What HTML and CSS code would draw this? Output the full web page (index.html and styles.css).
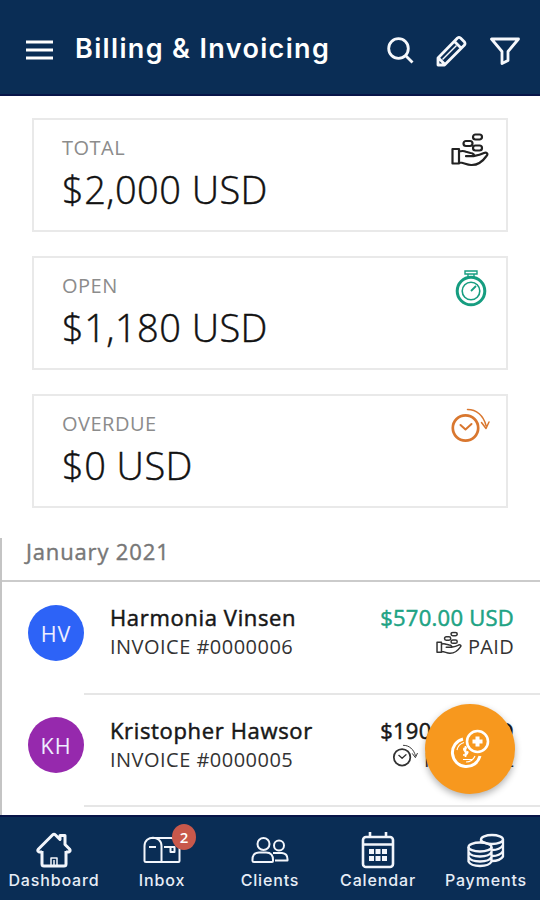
FILE: index.html
```html
<!DOCTYPE html>
<html lang="en">
<head>
<meta charset="utf-8">
<title>Billing &amp; Invoicing</title>
<link rel="stylesheet" href="styles.css">
</head>
<body>
<svg class="defs" width="0" height="0" aria-hidden="true">
  <symbol id="hand" viewBox="0 0 38 34">
    <g fill="none" stroke="currentColor" stroke-width="2.200" stroke-linejoin="round" stroke-linecap="round">
      <path d="M1.500 16h6.500v14.500H1.500zM8 18.500c3-.8 5-.8 7 .3l4.500 1.200c3 .2 4 2 3 3.200h-7.500M22.500 23.200c4-.8 7-1.500 10.500-3.200 2.500-1 4.500.8 2.500 3-3.500 5-9.500 9.300-15.500 9-5-.3-7-2.500-12-2.500"/>
      <rect x="22" y="1.500" width="9" height="5" rx="2.500"/><rect x="12.500" y="8" width="9" height="5" rx="2.500"/><rect x="22" y="12.500" width="9" height="5" rx="2.500"/>
    </g>
  </symbol>
  <symbol id="late" viewBox="0 0 40 36">
    <g fill="none" stroke="currentColor" stroke-linecap="round" stroke-linejoin="round">
      <circle cx="15.500" cy="20" r="12.700" stroke-width="2.700"/>
      <path stroke-width="2" d="M10.500 17l5 4.500 6-5.500"/>
      <path stroke-width="1.500" d="M17.500 1.500c9 0 16 6 18.500 16M31.500 14.500l4.500 6 3-6.500"/>
    </g>
  </symbol>
</svg>
<div class="app">
  <header class="top">
    <svg class="menu" viewBox="0 0 27 20"><path d="M0 2h27M0 10h27M0 18h27" stroke="#fff" stroke-width="3"/></svg>
    <h1>Billing &amp; Invoicing</h1>
    <div class="tools">
      <svg width="28" height="28" viewBox="0 0 28 28"><circle cx="12.500" cy="11.500" r="9.800"/><path d="M19.500 18.500l7 7"/></svg>
      <svg width="32" height="32" viewBox="0 0 32 32"><path d="M3 30V23L22.500 3Q24 1.800 25.500 3L29.500 7Q30.500 8.500 29.500 10L9.500 30ZM19.500 6.500l6.500 6.500M3.500 23l6.500 6.500"/><path stroke-width="1.500" d="M7.500 24.500l14-14"/></svg>
      <svg width="32" height="28" viewBox="0 0 32 28"><path d="M3.500 2H30.500L20 14.500V23.500L14 26.500V14.500Z"/></svg>
    </div>
  </header>
  <main>
    <section class="cards">
      <article class="card"><div><p class="label">TOTAL</p><p class="sum">$2,000 USD</p></div><svg class="i-hand" viewBox="0 0 38 34"><use href="#hand"/></svg></article>
      <article class="card"><div><p class="label">OPEN</p><p class="sum">$1,180 USD</p></div>
        <svg class="i-watch" viewBox="0 0 32 38" fill="none" stroke="#169d80"><circle cx="16" cy="22" r="13.800" stroke-width="3"/><circle cx="16" cy="22" r="8.800" stroke-width="1.600"/><path stroke-width="1.800" d="M16 22l5-5"/><path stroke-width="1.400" d="M10 2h12v3H10zM13 5v4M19 5v4"/></svg></article>
      <article class="card"><div><p class="label">OVERDUE</p><p class="sum">$0 USD</p></div><svg class="i-late" viewBox="0 0 40 36"><use href="#late"/></svg></article>
    </section>
    <section class="list">
      <h2>January 2021</h2>
      <article class="row">
        <span class="avatar blue">HV</span>
        <div class="body">
          <div><p class="name">Harmonia Vinsen</p><p class="inv">INVOICE #0000006</p></div>
          <div class="amt"><p class="money paid">$570.00 USD</p><p class="state"><svg class="s-hand" viewBox="0 0 38 34"><use href="#hand"/></svg><span>PAID</span></p></div>
        </div>
      </article>
      <article class="row">
        <span class="avatar purple">KH</span>
        <div class="body">
          <div><p class="name">Kristopher Hawsor</p><p class="inv">INVOICE #0000005</p></div>
          <div class="amt"><p class="money">$190.00 USD</p><p class="state"><svg class="s-late" viewBox="0 0 40 36"><use href="#late"/></svg><span class="partial">PARTIAL</span></p></div>
        </div>
      </article>
    </section>
  </main>
  <button class="fab" aria-label="Add invoice">
    <svg width="40" height="40" viewBox="0 0 40 40" fill="none" stroke="#fff"><path stroke-width="3" d="M13 10A14 14 0 1 0 30 27"/><path stroke-width="1.200" d="M14 13.500A10 10 0 0 0 7 21M16 33A10 10 0 0 0 25 27M13 30.500h9"/><path stroke-width="1.700" d="M17 19q-4-.5-3 2t3 2-1 3h-3M15.500 17v11"/><circle cx="27.500" cy="12.500" r="10.500" stroke-width="2.600"/><path stroke-width="4" d="M27.500 7.500v10M22.500 12.500h10"/></svg>
  </button>
  <nav>
    <a><svg width="36" height="36" viewBox="0 0 36 36" stroke-width="3"><path d="M6 19v13Q6 34 8 34H28Q30 34 30 32V19M6 20H3Q.8 19 2.500 17L16.500 3Q18 1.500 19.500 3L24 7.500V3.500H29V12.500L33.500 17Q35 19 33 20H30"/><path stroke-width="1.500" d="M15 34V26h6v8M18 28v6"/></svg><span>Dashboard</span></a>
    <a><svg width="38" height="36" viewBox="0 0 38 36" stroke-width="2"><path d="M1.500 29V14C1.500 3 18.500 3 18.500 14V29Q18.500 30 17.500 30H3Q1.500 30 1.500 29ZM10 6H28Q36.500 6 36.500 14V29Q36.500 30 35.500 30H17M6 15h7M21 15h10"/><path d="M27.500 15h4v5h-4z"/></svg><span>Inbox</span><b class="badge">2</b></a>
    <a><svg width="38" height="36" viewBox="0 0 38 36" stroke-width="2"><circle cx="12.500" cy="12" r="6"/><path d="M1.500 29Q1 20.500 8 20.500H15Q22.500 20.500 22 29Q22 30 21 30H3Q1.500 30 1.500 29Z"/><circle cx="28" cy="13.500" r="5"/><path d="M22 21H31Q37 21.500 36.500 28.500H24"/></svg><span>Clients</span></a>
    <a><svg width="34" height="38" viewBox="0 0 34 38" stroke-width="2.600"><rect x="2" y="6" width="30" height="30" rx="3"/><path d="M2 13.500h30M9 1v5M25 1v5"/><path d="M8 20.500h18M8 27.500h18" stroke-width="5" stroke-dasharray="5 1.500"/></svg><span>Calendar</span></a>
    <a><svg width="38" height="36" viewBox="0 0 38 36" stroke-width="2.300"><ellipse cx="25" cy="7.500" rx="11" ry="4.500"/><path d="M14 7.500v3M36 7.500v17q-3 4.500-11 4.500M36 13q-3 5-11 5M36 19q-3 5-11 5"/><ellipse cx="13" cy="15" rx="11.500" ry="4.500"/><path d="M1.500 15v14.500c3 6 20 6 23 0V15M1.500 20c3 6 20 6 23 0M1.500 25c3 6 20 6 23 0"/></svg><span>Payments</span></a>
  </nav>
</div>
</body>
</html>
```
FILE: styles.css
```css
* { box-sizing: border-box; margin: 0; padding: 0; }
body { width: 540px; height: 900px; overflow: hidden; background: #fff; font-family: "Open Sans", "Noto Sans", sans-serif; color: #171717; white-space: nowrap; }
.defs { position: absolute; }
.app { position: relative; width: 540px; height: 900px; display: flex; flex-direction: column; }
.top { height: 96px; flex: none; background: #0a2d55; border-bottom: 2px solid #071548; display: flex; align-items: center; padding: 4px 20px 0 26px; }
.menu { width: 27px; height: 20px; margin-top: 2px; }
h1 { font: 600 27px/36px Inter, sans-serif; color: #fff; margin-left: 22px; width: 257px; letter-spacing: 1.35px; }
.tools { margin-left: auto; display: flex; align-items: center; gap: 21px; fill: none; stroke: #f6f8fc; stroke-width: 2.8; stroke-linejoin: round; padding-top: 4px; }
.tools svg { display: block; }
main { flex: 1; min-height: 0; overflow: hidden; display: flex; flex-direction: column; }
.cards { padding: 22px 32px 0; display: flex; flex-direction: column; gap: 24px; }
.card { height: 114px; border: 2px solid #e9e9e9; display: flex; justify-content: space-between; padding: 14px 16px 0 28px; }
.label { font-size: 20px; line-height: 28px; color: #8c8c8c; letter-spacing: .5px; }
.sum { font-size: 38px; line-height: 54px; font-weight: 300; color: #111; letter-spacing: .45px; -webkit-text-stroke: .45px #111; }
.i-hand { width: 38px; height: 34px; margin: -1px 1px 0 0; color: #222; }
.i-watch { width: 32px; height: 38px; margin: -3px 3px 0 0; }
.i-late { width: 40px; height: 36px; margin-top: -2px; color: #d9772f; }
.list { margin-top: 30px; border-left: 2px solid #c4c4c4; flex: 1; }
h2 { height: 44px; border-bottom: 2px solid #cbcbcb; padding-left: 24px; font-size: 22px; line-height: 26px; font-weight: 400; color: #777; letter-spacing: .85px; -webkit-text-stroke: .4px #777; }
.row { display: flex; height: 112.500px; padding-left: 26px; }
.avatar { width: 56px; height: 56px; border-radius: 50%; margin-top: 22.500px; text-align: center; line-height: 57px; font-size: 21.500px; color: #eef; letter-spacing: 1px; flex: none; }
.blue { background: #2d63f7; }
.purple { background: #9629ad; }
.body { flex: 1; border-bottom: 2px solid #e6e6e6; display: flex; justify-content: space-between; padding: 20px 26px 0 26px; }
.name, .money { font-size: 22px; line-height: 30px; font-weight: 400; -webkit-text-stroke: .5px currentColor; }
.name { letter-spacing: .65px; }
.money { letter-spacing: .25px; }
.inv, .state { font-size: 20px; line-height: 29px; color: #333; }
.inv { letter-spacing: .48px; }
.amt { text-align: right; }
.paid { color: #20a384; }
.state { display: flex; justify-content: flex-end; gap: 6px; letter-spacing: .3px; }
.s-hand { width: 26px; height: 24px; margin-top: -1px; }
.s-late { width: 26px; height: 24px; margin-top: -1px; }
.partial { letter-spacing: 2.200px; margin-right: -2px; }
.fab { position: absolute; left: 425px; top: 704px; width: 90px; height: 90px; border: 0; border-radius: 50%; background: #f7981e; box-shadow: 0 3px 7px rgba(0,0,0,.3); display: grid; place-items: center; }
nav { height: 85px; flex: none; background: #0a2d55; border-top: 2px solid #071548; display: grid; grid-template-columns: repeat(5, 1fr); }
nav a { position: relative; display: flex; flex-direction: column; align-items: center; color: #e7edf7; font: 500 16px/22px Inter, sans-serif; letter-spacing: .85px; padding-top: 14px; }
nav svg { height: 38px; fill: none; stroke: #f2f5fb; stroke-linejoin: round; stroke-linecap: butt; }
.badge { position: absolute; left: 64px; top: 7px; width: 24px; height: 26px; border-radius: 50%; background: #c8584b; color: #fff; font: 600 15px/26px "Open Sans", sans-serif; letter-spacing: 0; text-align: center; }
```
